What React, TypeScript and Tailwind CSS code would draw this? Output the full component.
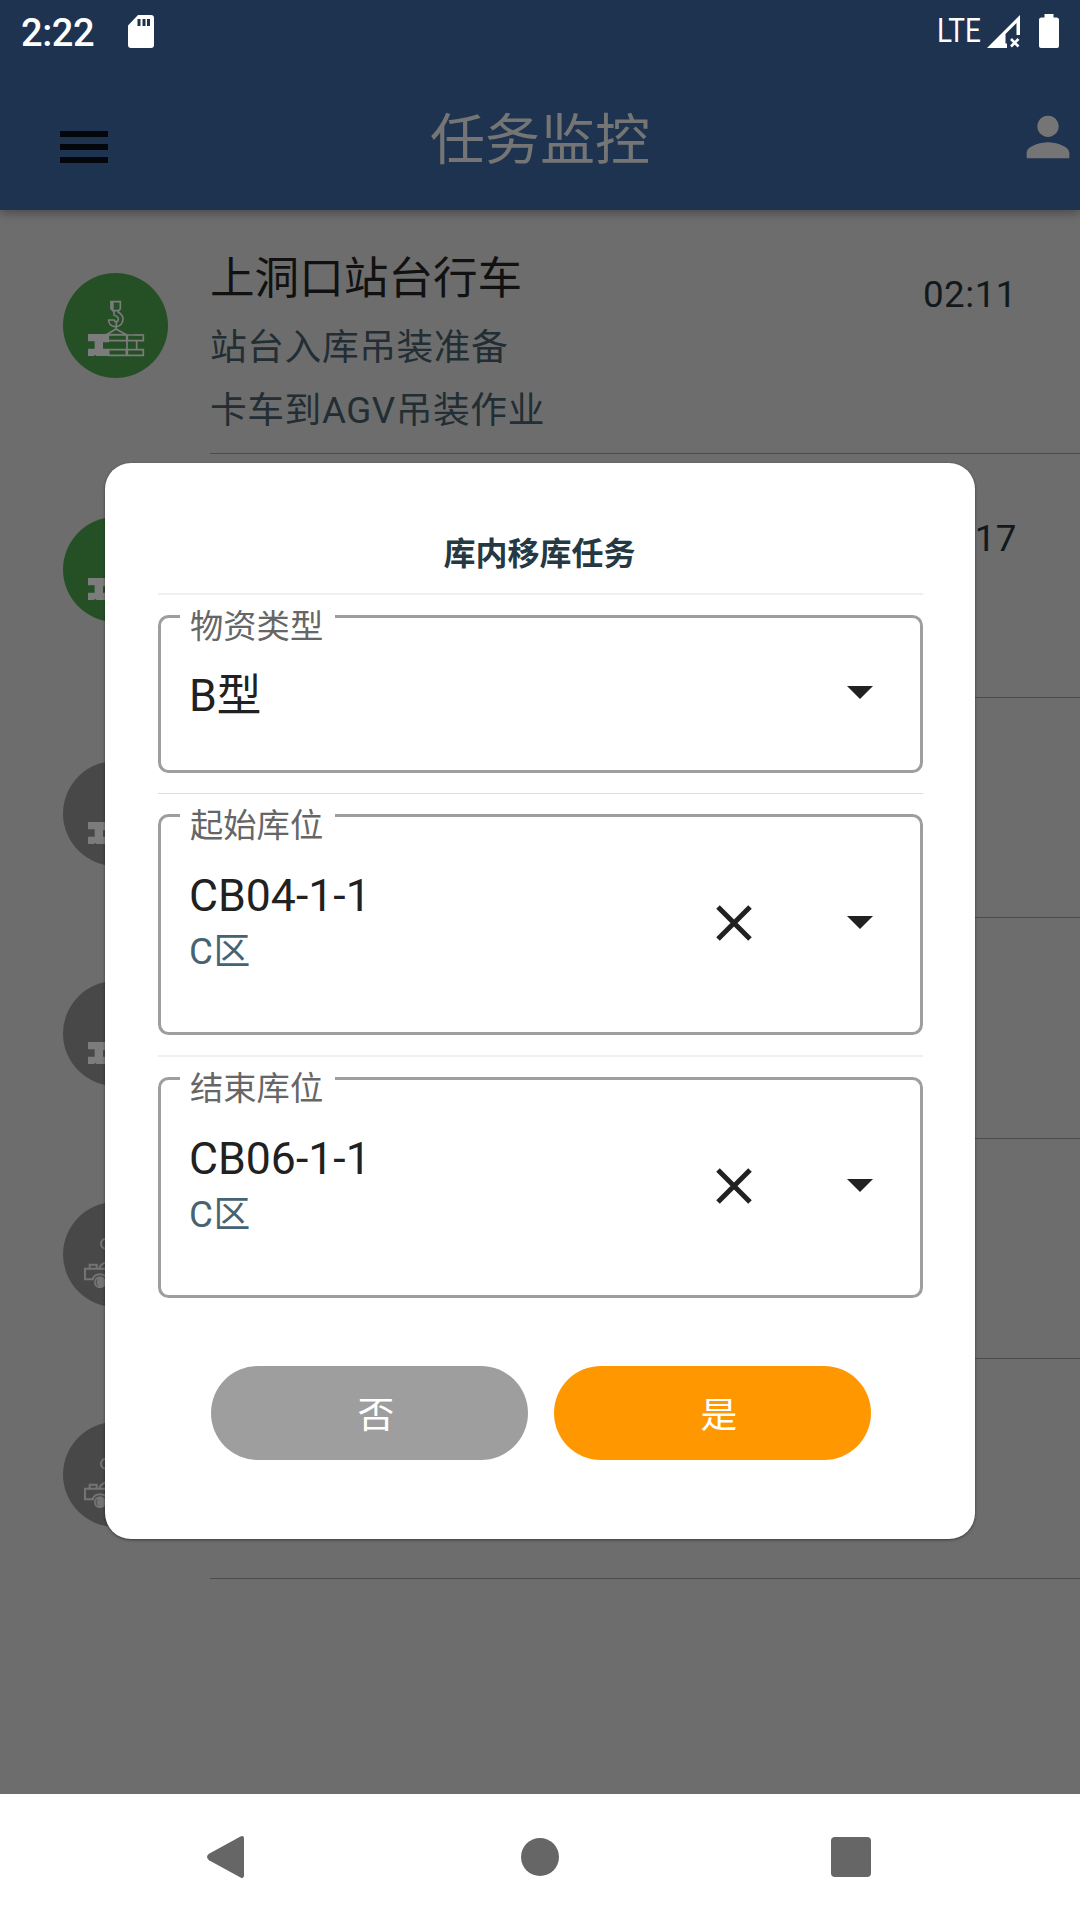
import React from "react";

type IconKind = "crane" | "truck";

interface Task {
  title?: string;
  lines?: string[];
  time?: string;
  icon: IconKind;
  active: boolean;
  tall: boolean;
}

const TASKS: Task[] = [
  {
    title: "上洞口站台行车",
    lines: ["站台入库吊装准备", "卡车到AGV吊装作业"],
    time: "02:11",
    icon: "crane",
    active: true,
    tall: true,
  },
  { time: "02:17", icon: "crane", active: true, tall: true },
  { icon: "crane", active: false, tall: false },
  { icon: "crane", active: false, tall: false },
  { icon: "truck", active: false, tall: false },
  { icon: "truck", active: false, tall: false },
];

function CraneIcon() {
  return (
    <svg viewBox="69 69 315 315" className="size-[105px]" fill="none" stroke="#7c7c7c" strokeWidth="5">
      <path d="M213 155h28v21l-5 6h-18l-5-6z" />
      <path d="M213 155h8v26h-3l-5-6z" fill="#7c7c7c" stroke="none" />
      <path d="M222 182v13c10 4 14 8 13 14-1 8-11 9-13 1h-16c0 12 9 20 21 20 13 0 22-10 22-22 0-11-7-17-14-21v-5" />
      <path d="M229 212v25M199 254l29-17 31 17" />
      <path d="M144 252h60v22h-15v24h17v20h-36l-4-3-5 3h-17v-22h20v-22h-20z" fill="#7c7c7c" stroke="none" />
      <path d="M205 255h55v17h-55zM262 255h48v17h-48zM206 299h53v17h-53zM262 299h48v17h-48zM261 272v27M290 274v24M189 299h18M189 274h18" />
      <path d="M196 253h63M284 253q10 5 22 0" strokeWidth="3" />
    </svg>
  );
}

function TruckIcon() {
  return (
    <svg viewBox="69 69 315 315" className="size-[105px]" fill="none" stroke="#747474" strokeWidth="6">
      <circle cx="198" cy="194" r="15" />
      <path d="M162 301h-27v-32h90v-12M149 268v-11h21v11M178 266q8-15 26-17h70l30 22v30h-22M205 301h38" />
      <circle cx="180" cy="310" r="18" fill="#747474" stroke="none" />
      <path d="M172 301a14 14 0 0 0 2 20" stroke="#484848" strokeWidth="2.5" />
      <path d="M157 303a24 24 0 0 1 46 0" />
      <circle cx="263" cy="310" r="18" fill="#747474" stroke="none" />
    </svg>
  );
}

function StatusBar() {
  return (
    <div className="flex h-[63px] items-start justify-between text-white">
      <div className="flex items-start pl-[21px]">
        <span className="mt-[10px] text-[38px] leading-[46px] font-medium tracking-[-0.4px]">2:22</span>
        <svg viewBox="0 0 26 33" className="mt-[15px] ml-[34px] h-[33px] w-[26px]">
          <path
            fillRule="evenodd"
            fill="#fff"
            d="M10 0h13a3 3 0 0 1 3 3v27a3 3 0 0 1-3 3H3a3 3 0 0 1-3-3V10.500zM9.500 4v7h3V4zM14.500 4v7h3V4zM19 4v7h3V4z"
          />
        </svg>
      </div>
      <div className="flex items-start">
        <span className="mt-[12px] w-[44px] origin-left scale-x-[0.86] text-[32.5px] leading-[38px]">LTE</span>
        <svg viewBox="0 0 33 33" className="mt-[15px] ml-[6px] h-[33px] w-[33px]">
          <path
            fillRule="evenodd"
            fill="#fff"
            d="M33 0v20h-3.500V8L18.500 19v9.500h1.500V33H0z"
          />
          <path d="M24 24l7.500 7.500M31.500 24L24 31.500" stroke="#fff" strokeWidth="2.600" />
        </svg>
        <svg viewBox="0 0 20 34" className="mt-[14px] mr-[21px] ml-[19px] h-[34px] w-[20px]">
          <path fill="#fff" d="M5.500 0h9v3.500h3A2.500 2.500 0 0 1 20 6v26a2 2 0 0 1-2 2H2a2 2 0 0 1-2-2V6a2.500 2.500 0 0 1 2.500-2.500h3z" />
        </svg>
      </div>
    </div>
  );
}

function AppBar() {
  return (
    <header className="relative z-10 h-[210px] bg-[#1e3350] shadow-[0_3px_10px_rgba(0,0,0,0.32)]">
      <StatusBar />
      <div className="flex h-[147px] items-start">
        <div className="mt-[68px] ml-[60px] flex h-[32px] w-[48px] flex-col justify-between">
          <span className="h-[6px] bg-[#03060a]" />
          <span className="h-[6px] bg-[#03060a]" />
          <span className="h-[6px] bg-[#03060a]" />
        </div>
        <h1 className="ml-[108px] w-[648px] pt-[42px] text-center text-[55px] leading-[70px] text-[#757575]">任务监控</h1>
        <svg viewBox="0 0 24 24" className="mt-[42px] ml-auto size-[64px]" fill="#757575">
          <path d="M12 12c2.210 0 4-1.790 4-4s-1.790-4-4-4-4 1.790-4 4 1.790 4 4 4zm0 2c-2.670 0-8 1.340-8 4v2h16v-2c0-2.660-5.330-4-8-4z" />
        </svg>
      </div>
    </header>
  );
}

function TaskRow({ task }: { task: Task }) {
  return (
    <li className={`flex ${task.tall ? "h-[244px]" : "h-[220.3px]"}`}>
      <div
        className={`mt-[63px] ml-[63px] size-[105px] shrink-0 rounded-full ${task.active ? "bg-[#255026]" : "bg-[#484848]"}`}
      >
        {task.icon === "crane" ? <CraneIcon /> : <TruckIcon />}
      </div>
      <div className="ml-[42px] flex grow justify-between border-b border-[#4b4b4b] pr-[63px]">
        <div className="pt-[41px]">
          <div className="text-[44.6px] leading-[56px] text-[#111111]">{task.title}</div>
          <div className="mt-[9px] text-[36.75px] leading-[63px] tracking-[0.55px] text-[#222e34]">
            {task.lines?.map((line) => <div key={line}>{line}</div>)}
          </div>
        </div>
        <div className="pt-[60px] text-[36.75px] leading-[50px] tracking-[0.5px] text-[#11191d]">{task.time}</div>
      </div>
    </li>
  );
}

interface FieldProps {
  label: string;
  value: string;
  zone?: string;
}

function SelectField({ label, value, zone }: FieldProps) {
  return (
    <div
      className={`relative flex items-start justify-between rounded-[10.5px] border-3 border-[#9e9e9e] pr-[47px] pl-[28px] ${
        zone ? "h-[221px]" : "h-[158px]"
      }`}
    >
      <div className="absolute -top-[8px] left-[19px] w-[155px] bg-white pl-[10px] text-[33.3px] leading-[34px] text-[#666666]">
        {label}
      </div>
      <div className={zone ? "pt-[53px]" : "pt-[52px]"}>
        <div className="text-[44.6px] leading-[52px] text-[#212121]">{value}</div>
        {zone && <div className="mt-[5px] text-[36.75px] leading-[50px] tracking-[0.66px] text-[#456372]">{zone}</div>}
      </div>
      <div className="flex h-full items-center pb-[4px]">
        {zone && (
          <svg viewBox="0 0 36 36" className="mr-[95px] size-[36px]" stroke="#212121" strokeWidth="5">
            <path d="M2 2l32 32M34 2L2 34" />
          </svg>
        )}
        <svg viewBox="0 0 26 13" className="h-[13px] w-[26px]" fill="#212121">
          <path d="M0 0h26L13 13z" />
        </svg>
      </div>
    </div>
  );
}

function TransferDialog() {
  return (
    <section className="absolute top-[463px] left-[105px] z-20 flex h-[1076px] w-[870px] flex-col rounded-[26px] bg-white pt-[71px] pr-[52px] pl-[53px] shadow-[0_1px_3px_rgba(0,0,0,0.45)]">
      <h2 className="pr-[2px] text-center text-[32px] leading-[40px] font-bold text-[#263943]">库内移库任务</h2>
      <hr className="mt-[19px] mb-[20px] h-[2px] border-0 bg-[#efefef]" />
      <SelectField label="物资类型" value="B型" />
      <hr className="mt-[20px] mb-[20px] h-px border-0 bg-[#dddddd]" />
      <SelectField label="起始库位" value="CB04-1-1" zone="C区" />
      <hr className="mt-[20px] mb-[20px] h-[2px] border-0 bg-[#efefef]" />
      <SelectField label="结束库位" value="CB06-1-1" zone="C区" />
      <div className="mt-[68px] flex gap-[26px] pl-[53px] text-[36.75px] leading-[50px] text-white">
        <button className="h-[94px] w-[317px] rounded-full bg-[#9e9e9e] pt-[6px] pl-[13px]">否</button>
        <button className="h-[94px] w-[317px] rounded-full bg-[#ff9800] pt-[6px] pl-[13px]">是</button>
      </div>
    </section>
  );
}

function NavigationBar() {
  return (
    <nav className="flex h-[126px] items-center bg-white">
      <svg viewBox="0 0 37 42" className="ml-[207px] h-[42px] w-[37px]" fill="#666666">
        <path d="M33.500 0.600Q37-1 37 2.500v37Q37 43 33.500 41.400L2 24.200Q-2 21 2 17.800z" />
      </svg>
      <span className="ml-[277px] size-[38px] rounded-full bg-[#666666]" />
      <span className="ml-[272px] size-[40px] rounded-[4px] bg-[#666666]" />
    </nav>
  );
}

export default function App() {
  return (
    <main
      lang="zh-CN"
      className="relative flex h-[1920px] w-[1080px] flex-col overflow-hidden bg-[#6d6d6d] font-['Roboto','Noto_Sans_CJK_SC',sans-serif]"
    >
      <AppBar />
      <ul className="grow">
        {TASKS.map((task, index) => (
          <TaskRow key={index} task={task} />
        ))}
      </ul>
      <TransferDialog />
      <NavigationBar />
    </main>
  );
}
